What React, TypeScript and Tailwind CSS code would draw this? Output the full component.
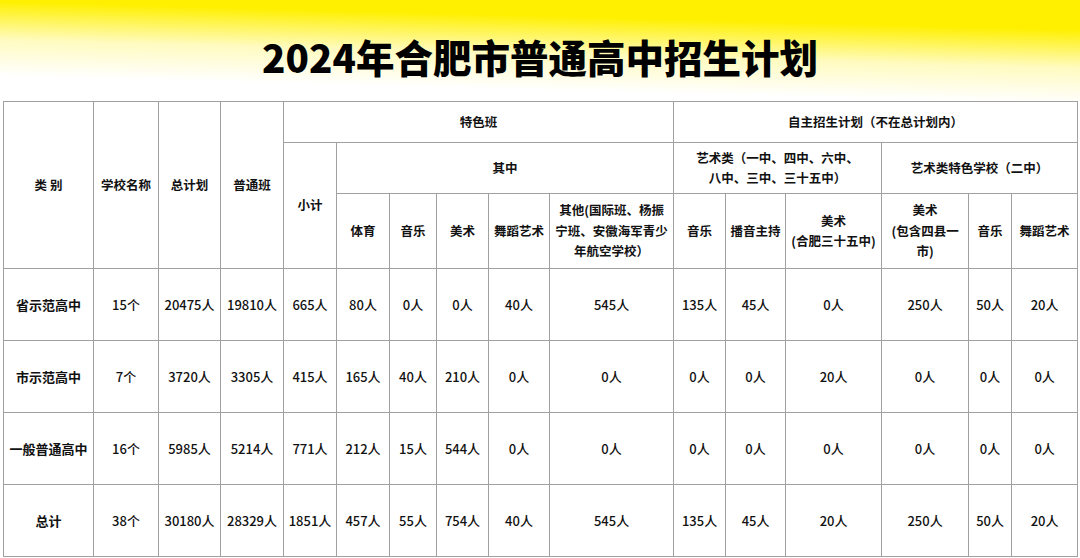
import React from "react";

const font = { fontFamily: '"Noto Sans CJK SC", "Noto Sans", sans-serif' };

const widths = [90, 65, 62, 63, 53, 53, 47, 52, 61, 124, 52, 60, 96, 87, 43, 66];

const rows: { name: string; cells: string[] }[] = [
  {
    name: "省示范高中",
    cells: ["15个", "20475人", "19810人", "665人", "80人", "0人", "0人", "40人", "545人", "135人", "45人", "0人", "250人", "50人", "20人"],
  },
  {
    name: "市示范高中",
    cells: ["7个", "3720人", "3305人", "415人", "165人", "40人", "210人", "0人", "0人", "0人", "0人", "20人", "0人", "0人", "0人"],
  },
  {
    name: "一般普通高中",
    cells: ["16个", "5985人", "5214人", "771人", "212人", "15人", "544人", "0人", "0人", "0人", "0人", "0人", "0人", "0人", "0人"],
  },
  {
    name: "总计",
    cells: ["38个", "30180人", "28329人", "1851人", "457人", "55人", "754人", "40人", "545人", "135人", "45人", "20人", "250人", "50人", "20人"],
  },
];

const th = "border border-[#a0a0a0] font-bold text-center align-middle p-0 text-[12.5px] leading-[20.5px] text-[#111]";
const td = "border border-[#a0a0a0] text-center align-middle p-0 text-[13px] font-medium text-[#111]";
const tdBold = "border border-[#a0a0a0] text-center align-middle p-0 text-[13px] font-bold text-[#111]";

export default function App() {
  return (
    <div className="w-[1080px] h-[558px] bg-white overflow-hidden" style={font}>
      <div className="h-[101px] flex items-center justify-center pt-[12px] bg-[linear-gradient(181.5deg,#fff000_30px,#fffbc0_68px,#ffffff_104px)]">
        <h1 className="text-[38.5px] font-black leading-none text-black">2024年合肥市普通高中招生计划</h1>
      </div>
      <div className="pl-[3px]">
        <table className="table-fixed border-collapse w-[1075px]">
          <colgroup>
            {widths.map((w, i) => (
              <col key={i} style={{ width: w }} />
            ))}
          </colgroup>
          <thead>
            <tr className="h-[41px]">
              <th rowSpan={3} className={th}>类 别</th>
              <th rowSpan={3} className={th}>学校名称</th>
              <th rowSpan={3} className={th}>总计划</th>
              <th rowSpan={3} className={th}>普通班</th>
              <th colSpan={6} className={th}>特色班</th>
              <th colSpan={6} className={th}>自主招生计划（不在总计划内）</th>
            </tr>
            <tr className="h-[51px]">
              <th rowSpan={2} className={th}>小计</th>
              <th colSpan={5} className={th}>其中</th>
              <th colSpan={3} className={th}>
                艺术类（一中、四中、六中、
                <br />
                八中、三中、三十五中）
              </th>
              <th colSpan={3} className={th}>艺术类特色学校（二中）</th>
            </tr>
            <tr className="h-[75px]">
              <th className={th}>体育</th>
              <th className={th}>音乐</th>
              <th className={th}>美术</th>
              <th className={th}>舞蹈艺术</th>
              <th className={th}>
                其他(国际班、杨振
                <br />
                宁班、安徽海军青少
                <br />
                年航空学校）
              </th>
              <th className={th}>音乐</th>
              <th className={th}>播音主持</th>
              <th className={th}>
                美术
                <br />
                (合肥三十五中)
              </th>
              <th className={th}>
                美术
                <br />
                (包含四县一
                <br />
                市)
              </th>
              <th className={th}>音乐</th>
              <th className={th}>舞蹈艺术</th>
            </tr>
          </thead>
          <tbody>
            {rows.map((r) => (
              <tr key={r.name} className="h-[72px]">
                <td className={tdBold}>{r.name}</td>
                {r.cells.map((c, i) => (
                  <td key={i} className={td}>{c}</td>
                ))}
              </tr>
            ))}
          </tbody>
        </table>
      </div>
    </div>
  );
}
